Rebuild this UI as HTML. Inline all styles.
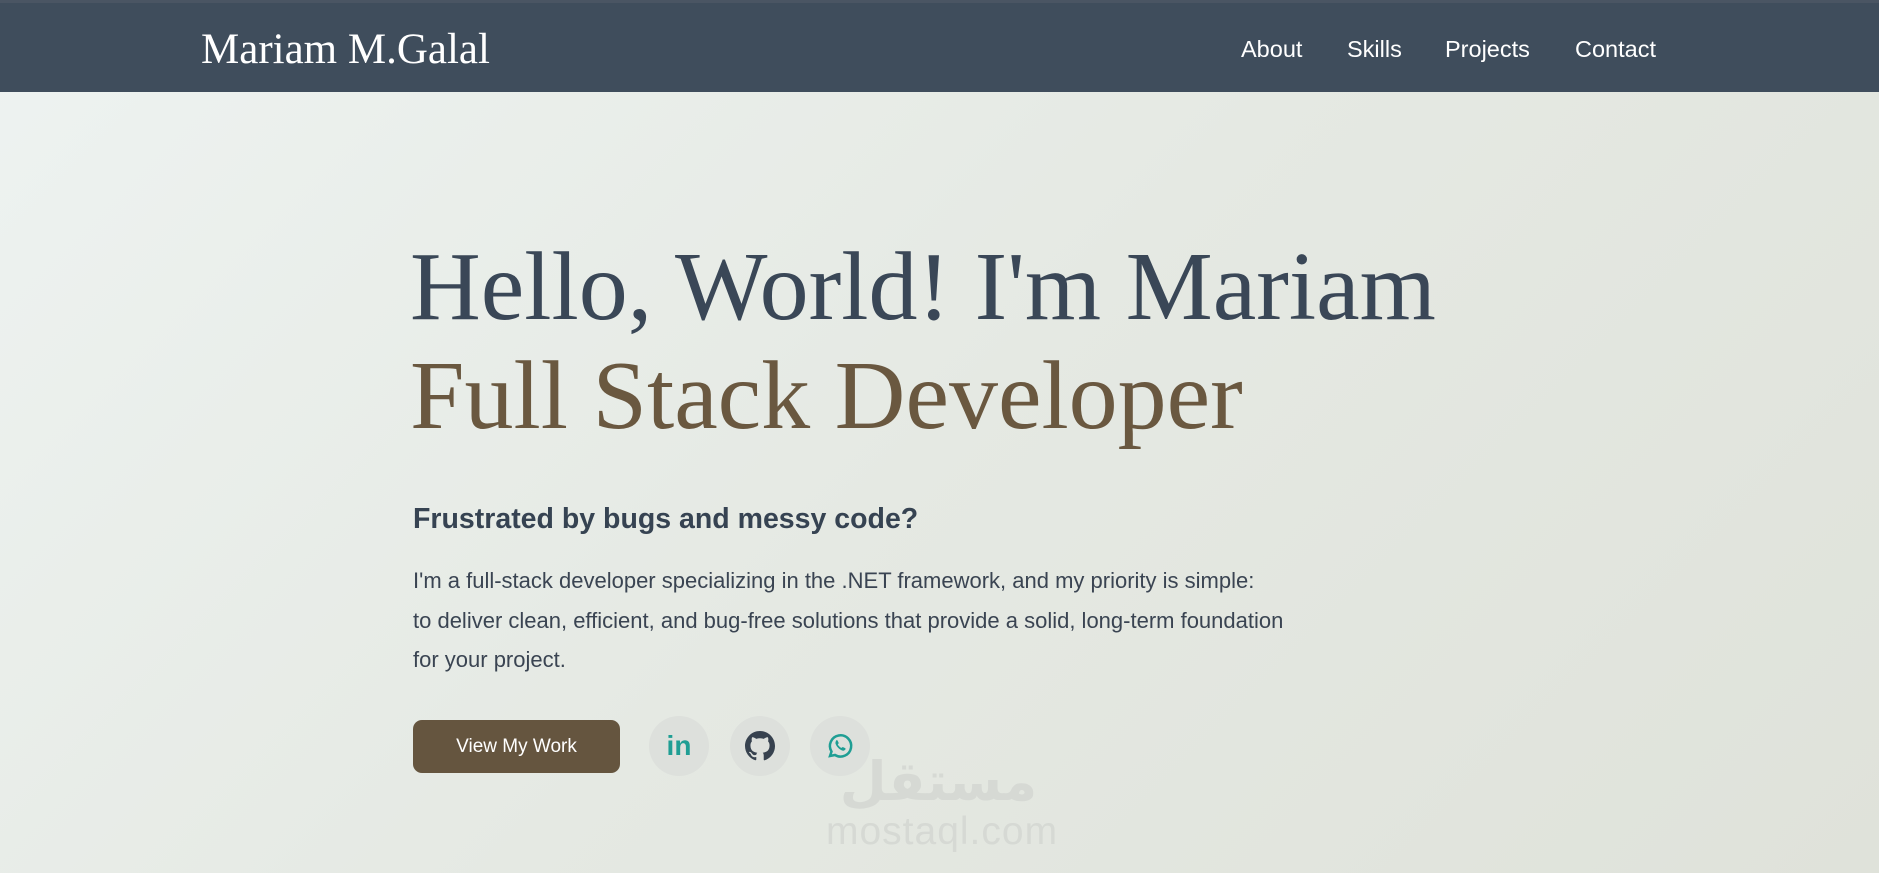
<!DOCTYPE html>
<html><head><meta charset="utf-8"><style>
*{margin:0;padding:0;box-sizing:border-box}
html,body{width:1879px;height:873px;overflow:hidden}
body{background:linear-gradient(135deg,#eef3f1 0%,#e5e9e3 50%,#dfe2da 100%);font-family:"Liberation Sans",sans-serif;position:relative}
nav{position:absolute;left:0;top:0;width:1879px;height:92px;background:#3f4d5c;border-top:3px solid #4a5563}
.logo{position:absolute;left:201px;top:22px;font-family:"Liberation Serif",serif;font-size:43px;color:#fff}
.links{position:absolute;top:33px;font-size:23.5px;color:#fff}
h1{position:absolute;left:410px;top:233px;font-family:"Liberation Serif",serif;font-weight:normal;font-size:98px;line-height:109px;color:#3a4757;white-space:nowrap}
h1 span{color:#6a5840}
h2{position:absolute;left:413px;top:503px;font-size:28.5px;font-weight:bold;color:#364352}
p{position:absolute;left:413px;top:561px;font-size:22px;line-height:39.5px;color:#3a4452;white-space:nowrap}
.btn{position:absolute;left:413px;top:720px;width:207px;height:53px;background:#65553f;border-radius:9px;color:#fff;font-size:19px;text-align:center;line-height:53px}
.c{position:absolute;top:716px;width:60px;height:60px;border-radius:50%;background:#dde0dc;display:flex;align-items:center;justify-content:center}
.wm{position:absolute;left:826px;font-size:39px;color:#d6d9d4;letter-spacing:1px}
.wm2{position:absolute;left:826px;top:758px;width:225px;height:48px;font-size:54px;color:#d6d9d4;font-weight:bold;font-family:"DejaVu Sans",sans-serif;line-height:48px;text-align:center}
</style></head><body>
<nav>
<div class="logo">Mariam M.Galal</div>
<div class="links" style="left:1241px">About</div>
<div class="links" style="left:1347px">Skills</div>
<div class="links" style="left:1445px">Projects</div>
<div class="links" style="left:1575px">Contact</div>
</nav>
<h1>Hello, World! I'm Mariam<br><span>Full Stack Developer</span></h1>
<h2>Frustrated by bugs and messy code?</h2>
<p>I'm a full-stack developer specializing in the .NET framework, and my priority is simple:<br>to deliver clean, efficient, and bug-free solutions that provide a solid, long-term foundation<br>for your project.</p>
<div class="btn">View My Work</div>
<div class="c" style="left:649px"><span style="font-weight:bold;font-size:28px;color:#1f9e94;font-family:'Liberation Sans',sans-serif">in</span></div>
<div class="c" style="left:730px"><svg width="30" height="30" viewBox="0 0 16 16"><path fill="#37424f" d="M8 0C3.580 0 0 3.58 0 8c0 3.54 2.29 6.53 5.47 7.59.4.07.55-.17.55-.38v-1.33c-2.23.48-2.7-1.07-2.7-1.07-.36-.92-.89-1.17-.89-1.17-.73-.5.05-.49.05-.49.8.06 1.23.83 1.23.83.71 1.23 1.87.87 2.33.66.07-.52.28-.87.5-1.07-1.78-.2-3.64-.89-3.64-3.95 0-.87.31-1.59.82-2.15-.08-.2-.36-1.02.08-2.12 0 0 .67-.21 2.2.82a7.6 7.6 0 014 0c1.53-1.04 2.2-.82 2.2-.82.44 1.1.16 1.92.08 2.12.51.56.82 1.27.82 2.15 0 3.07-1.87 3.75-3.65 3.95.29.25.54.73.54 1.48v2.2c0 .21.15.46.55.38A8 8 0 0016 8c0-4.42-3.58-8-8-8z"/></svg></div>
<div class="c" style="left:810px"><svg width="30" height="30" viewBox="0 0 24 24"><path fill="none" stroke="#1f9e94" stroke-width="2" d="M4 20l1.2-3.6A8.5 8.5 0 1 1 8 19.2z"/><path fill="#1f9e94" d="M9 7.5c.4-.3.9-.2 1.1.2l.8 1.7c.1.3 0 .6-.2.8l-.5.5c.6 1.2 1.6 2.2 2.9 2.9l.5-.5c.2-.2.5-.3.8-.2l1.7.8c.4.2.5.7.2 1.1-.7.9-1.6 1.2-2.6.8-2.3-.9-4.3-2.9-5.2-5.2-.4-1 0-1.9.5-2.9z"/></svg></div>
<div class="wm2">مستقل</div>
<div class="wm" style="top:810px">mostaql.com</div>
</body></html>
